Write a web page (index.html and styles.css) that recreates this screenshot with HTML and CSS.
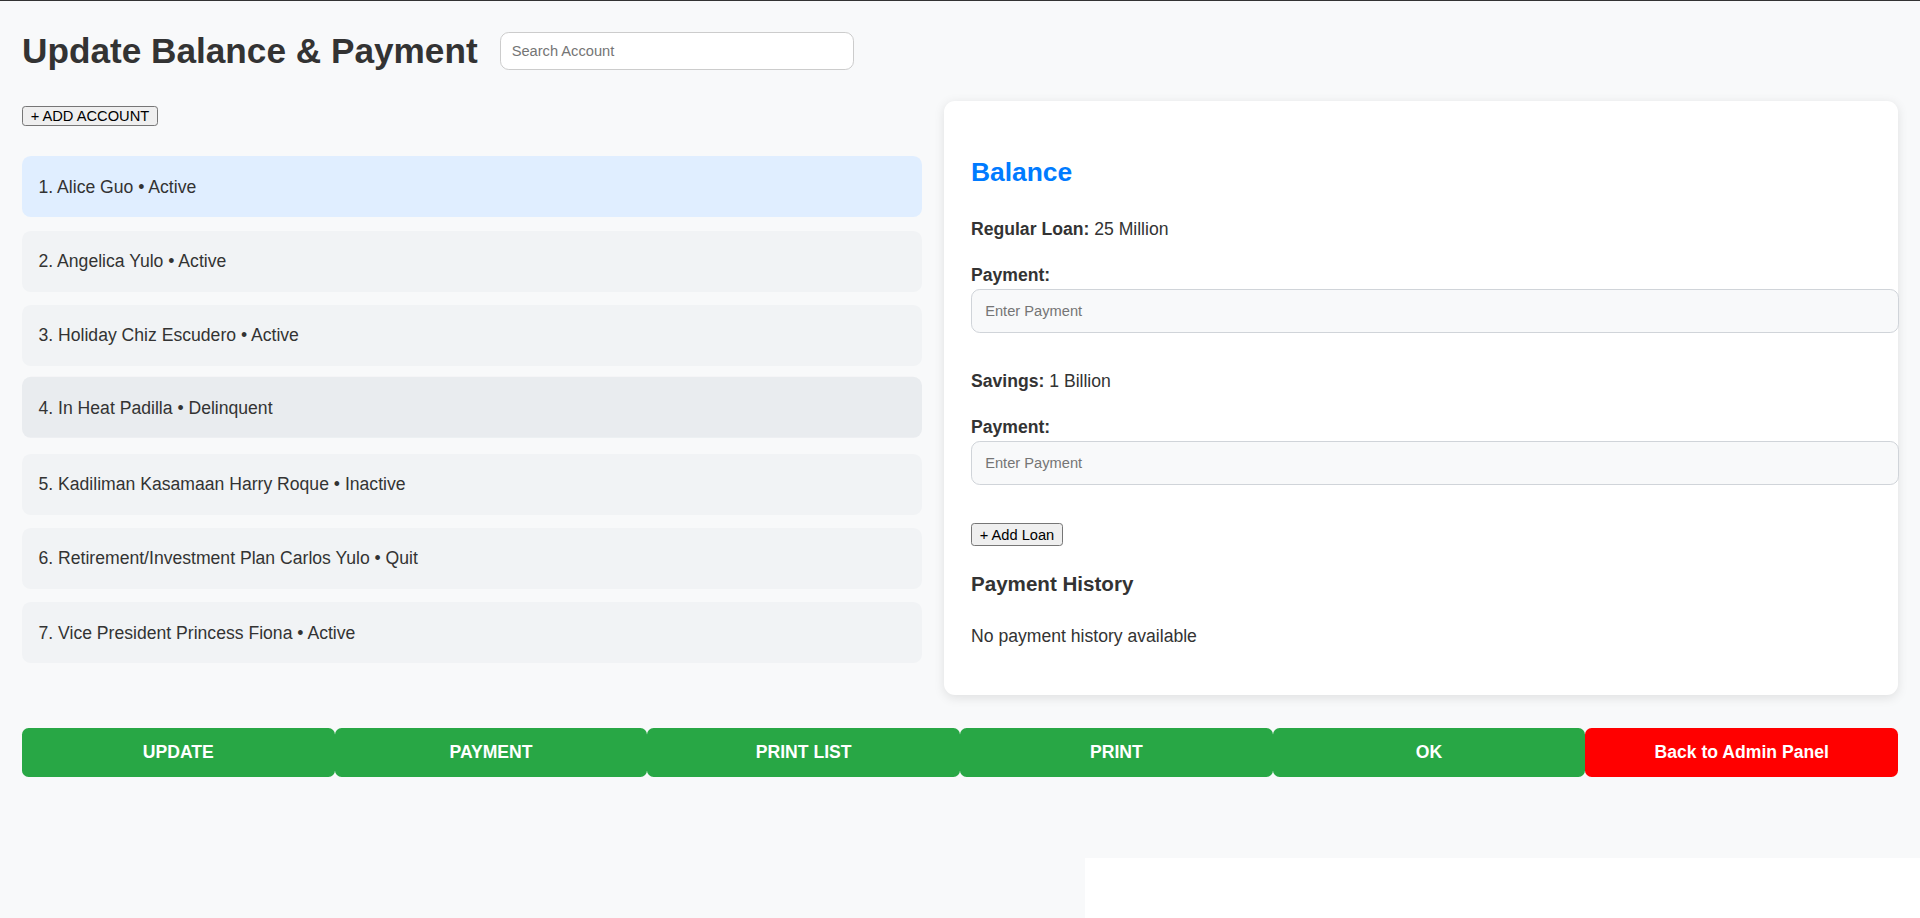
FILE: index.html
```html
<!DOCTYPE html>
<html lang="en">
<head>
<meta charset="utf-8">
<title>Update Balance &amp; Payment</title>
<link rel="stylesheet" href="styles.css">
</head>
<body>
<div class="app">
  <header class="header">
    <h1 class="title">Update Balance &amp; Payment</h1>
    <input class="search" type="text" placeholder="Search Account">
  </header>

  <div class="main">
    <section class="accounts">
      <div class="add-row"><button class="plain-btn">+ ADD ACCOUNT</button></div>
      <ul class="account-list">
        <li class="account selected">1. Alice Guo • Active</li>
        <li class="account">2. Angelica Yulo • Active</li>
        <li class="account">3. Holiday Chiz Escudero • Active</li>
        <li class="account hovered">4. In Heat Padilla • Delinquent</li>
        <li class="account">5. Kadiliman Kasamaan Harry Roque • Inactive</li>
        <li class="account">6. Retirement/Investment Plan Carlos Yulo • Quit</li>
        <li class="account">7. Vice President Princess Fiona • Active</li>
      </ul>
    </section>

    <section class="card">
      <h2 class="card-title">Balance</h2>
      <div class="loan">
        <p class="line"><strong>Regular Loan:</strong> 25 Million</p>
        <label class="field-label">Payment:</label>
        <input class="pay-input" type="text" placeholder="Enter Payment">
      </div>
      <div class="loan">
        <p class="line"><strong>Savings:</strong> 1 Billion</p>
        <label class="field-label">Payment:</label>
        <input class="pay-input" type="text" placeholder="Enter Payment">
      </div>
      <p class="line"><button class="plain-btn loan-btn">+ Add Loan</button></p>
      <h3 class="history-title">Payment History</h3>
      <p class="line">No payment history available</p>
    </section>
  </div>

  <div class="actions">
    <button class="action green">UPDATE</button>
    <button class="action green">PAYMENT</button>
    <button class="action green">PRINT LIST</button>
    <button class="action green">PRINT</button>
    <button class="action green">OK</button>
    <button class="action red">Back to Admin Panel</button>
  </div>
</div>
<div class="tail"></div>
</body>
</html>
```

FILE: styles.css
```css
html {
  background: #ffffff;
  overflow: hidden;
}

body {
  margin: 0;
  border-top: 1px solid #333333;
  font-family: "Liberation Sans", Arial, sans-serif;
  color: #333333;
}

.app {
  zoom: 1.1;
  background: #f8f9fa;
  padding: 20px 20px 74px;
  line-height: 1.6;
  font-size: 16px;
}

.tail {
  width: 1085px;
  height: 60px;
  background: #f8f9fa;
}

.header {
  display: flex;
  align-items: center;
  gap: 20px;
  margin-bottom: 20px;
}

.title {
  margin: 0;
  font-size: 32px;
  font-weight: bold;
  color: #333333;
}

.search {
  width: 300px;
  padding: 9px 10px;
  border: 1px solid #cccccc;
  border-radius: 8px;
  background: #ffffff;
  font: 13.333px "Liberation Sans", Arial, sans-serif;
  color: #333333;
  outline: none;
}

.search::placeholder,
.pay-input::placeholder {
  color: #757575;
}

.main {
  display: flex;
  gap: 20px;
  align-items: flex-start;
}

.accounts {
  flex: 1;
}

.add-row {
  margin: 0;
}

.plain-btn {
  font: 13.333px "Liberation Sans", Arial, sans-serif;
  padding: 1px 7px;
  border: 1px solid #767676;
  border-radius: 3px;
  background: #efefef;
  color: #000000;
}

.loan-btn {
  padding: 2px 7px;
}

.account-list {
  list-style: none;
  margin: 24.4px 0 0;
  padding: 0;
}

.account {
  padding: 15px;
  margin-bottom: 12px;
  border-radius: 8px;
  background: #f1f3f5;
}

.account.selected {
  background: #e0eeff;
}

.account.hovered {
  background: #e9ecef;
  transform: translateY(-2px);
}

.card {
  flex: 1;
  background: #ffffff;
  border-radius: 10px;
  padding: 25px;
  box-shadow: 0 2px 10px rgba(0, 0, 0, 0.1);
}

.card-title {
  font-size: 24px;
  margin: 19.92px 0;
  color: #007bff;
}

.line {
  margin: 16px 0;
}

.loan {
  padding-bottom: 15px;
}

.field-label {
  display: block;
  font-weight: bold;
}

.pay-input {
  display: block;
  width: 100%;
  padding: 12px;
  border: 1px solid #d0d4d9;
  border-radius: 8px;
  background: #f8f9fa;
  font: 13.333px "Liberation Sans", Arial, sans-serif;
  color: #333333;
  outline: none;
}

.history-title {
  font-size: 18.72px;
  margin: 18.72px 0;
}

.actions {
  display: flex;
  margin-top: 30px;
}

.action {
  flex: 1;
  border: none;
  border-radius: 6px;
  padding: 12.5px 10px;
  font: bold 16px "Liberation Sans", Arial, sans-serif;
  color: #ffffff;
}

.action.green {
  background: #28a745;
}

.action.red {
  background: #ff0000;
}
```
